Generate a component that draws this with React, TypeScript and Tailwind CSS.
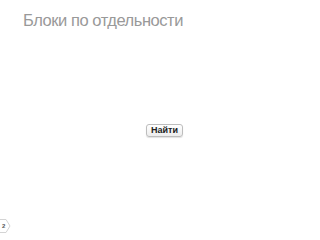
export default function App() {
  return (
    <div className="w-[320px] h-[240px] bg-white relative overflow-hidden font-['Liberation_Sans',Arial,sans-serif]">
      <h1 className="pl-[23px] pt-[10px] text-[16.5px] leading-[20px] tracking-[-0.45px] font-normal text-[#999]">
        Блоки по отдельности
      </h1>
      <div className="flex justify-center pt-[94px] pl-[9px]">
        <button className="w-[37px] h-[13px] rounded-[3px] border border-[#bdbdbd] bg-gradient-to-b from-white to-[#ededed] shadow-[0_1px_1px_rgba(0,0,0,0.12)] text-[9px] leading-[11px] font-bold text-[#222] flex items-center justify-center">
          Найти
        </button>
      </div>
      <div className="absolute left-[-4px] top-[219px] w-[15px] h-[14px] flex items-center">
        <svg width="15" height="14" viewBox="0 0 15 14" className="absolute inset-0">
          <path d="M0.5 0.5 H10 L14 7 L10 13.5 H0.5 Z" fill="white" stroke="#d4d4d4" strokeWidth="1" />
        </svg>
        <span className="relative pl-[6px] text-[6px] leading-[6px] font-bold text-[#555]">2</span>
      </div>
    </div>
  );
}
